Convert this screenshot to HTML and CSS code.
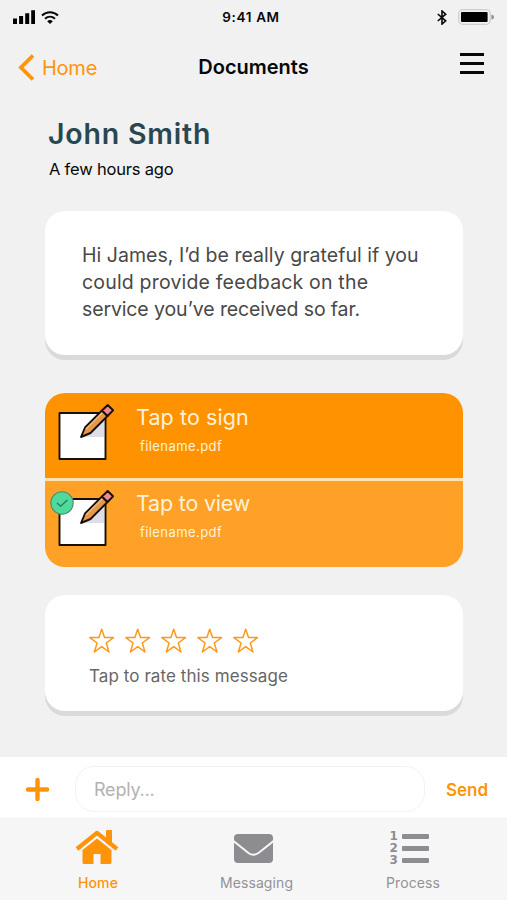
FILE: index.html
```html
<!DOCTYPE html>
<html lang="en">
<head>
<meta charset="utf-8">
<title>Documents</title>
<link rel="stylesheet" href="styles.css">
</head>
<body>
<svg class="defs" width="0" height="0" aria-hidden="true">
  <symbol id="note" viewBox="0 0 60 60">
    <path d="M4 10.5H50V57H4Z" fill="#fff"/>
    <path d="M49 15V35H29Z" fill="#dedee9"/>
    <path d="M4.5 11H50.500V57H4.5Z" fill="none" stroke="#170f08" stroke-width="1.9" stroke-linejoin="round"/>
    <path d="M26 35L30 25.500L47 8.500L52.500 14L35.500 31Z" fill="#e5984a" stroke="#170f08" stroke-width="1.9" stroke-linejoin="round"/>
    <path d="M31 27L47.300 10.700" stroke="#f4b873" stroke-width="1.5"/>
    <path d="M47 8.500L52.700 3L58.100 8.300L52.500 14Z" fill="#f08795" stroke="#170f08" stroke-width="1.9" stroke-linejoin="round"/>
  </symbol>
  <symbol id="star" viewBox="0 0 26 26">
    <path d="M12.700 1.300L15.500 9.600H24.500L17.300 15L20 24L12.700 18.700L5.400 24L8.100 15L.9 9.600H9.900Z" fill="none" stroke="#ff981c" stroke-width="1.500" stroke-linejoin="round"/>
  </symbol>
</svg>
<div class="screen">
  <div class="status">
    <div class="signal">
      <svg width="22" height="14" viewBox="0 0 22 14"><path d="M0 8.500H4V14H0ZM6.100 6H10.100V14H6.100ZM12.200 3.200H16.200V14H12.200ZM18.200 .2H22V14H18.200Z"/></svg>
      <svg width="18" height="13" viewBox="0 0 18 13"><path d="M1 4.500C5.500 .1 12.500 .1 17 4.500M4 7.800C7 5.100 11 5.100 14 7.800" fill="none" stroke="#080808" stroke-width="2"/><path d="M6.200 10.200Q9 8 11.800 10.200L9 13Z"/></svg>
    </div>
    <span class="clock">9:41 AM</span>
    <div class="power">
      <svg width="10" height="15" viewBox="0 0 10 15"><path d="M.8 4L8.700 10.800L5 14V1L8.700 4.200L.8 11" fill="none" stroke="#080808" stroke-width="1.600"/></svg>
      <svg width="37" height="16" viewBox="0 0 37 16"><rect x=".7" y=".7" width="31.600" height="14.600" rx="4" fill="none" stroke="#cfcfcf" stroke-width="1.300"/><rect x="3" y="3" width="26.600" height="10" rx="1"/><path d="M33.500 5.500Q36 6 36 8Q36 10 33.500 10.500Z" fill="#888"/></svg>
    </div>
  </div>
  <header class="nav">
    <div class="back"><svg width="17" height="27" viewBox="0 0 17 27"><path d="M15 1.500L3 13.500L15 25.500" fill="none" stroke="#ff9409" stroke-width="3.800"/></svg><span>Home</span></div>
    <h1>Documents</h1>
    <div class="menu"><i></i><i></i><i></i></div>
  </header>
  <main>
    <div class="sender"><h2>John Smith</h2><p>A few hours ago</p></div>
    <section class="card message">
      <p class="line1">Hi James, I’d be really grateful if you</p>
      <p class="line2">could provide feedback on the</p>
      <p class="line3">service you’ve received so far.</p>
    </section>
    <section class="docs">
      <div class="doc sign">
        <svg class="note" width="60" height="60"><use href="#note"/></svg>
        <div><h3>Tap to sign</h3><p>filename.pdf</p></div>
      </div>
      <div class="doc view">
        <div class="thumb">
          <svg class="note" width="60" height="60"><use href="#note"/></svg>
          <svg class="check" width="24" height="24" viewBox="0 0 24 24"><circle cx="12" cy="12" r="11.200" fill="#4fd99a" stroke="#4c8c67" stroke-width="1.100"/><path d="M7 12L10.700 15.300L17.300 9" fill="none" stroke="#267858" stroke-width="1.200"/></svg>
        </div>
        <div><h3 class="view-title">Tap to view</h3><p>filename.pdf</p></div>
      </div>
    </section>
    <section class="card rating">
      <div class="stars">
        <svg width="26" height="26"><use href="#star"/></svg><svg width="26" height="26"><use href="#star"/></svg><svg width="26" height="26"><use href="#star"/></svg><svg width="26" height="26"><use href="#star"/></svg><svg width="26" height="26"><use href="#star"/></svg>
      </div>
      <p>Tap to rate this message</p>
    </section>
  </main>
  <div class="composer">
    <svg width="23" height="23" viewBox="0 0 23 23"><path d="M11.500 2V21M2 11.500H21" stroke="#ff9409" stroke-width="4.400" stroke-linecap="round"/></svg>
    <div class="field">Reply...</div>
    <span class="send">Send</span>
  </div>
  <nav class="tabs">
    <div class="tab home">
      <svg width="44" height="36" viewBox="0 0 44 36"><path d="M2 20L22 3.800L42 20" fill="none" stroke="#ff9409" stroke-width="4.200" stroke-linejoin="round"/><path d="M31 2Q31 1 32 1H36Q37 1 37 2V15L31 10ZM22 9.500L36.500 21V33.500Q36.500 35 35 35H25.500V25H18.500V35H9Q7.500 35 7.500 33.500V21Z" fill="#ff9409"/></svg>
      <span>Home</span>
    </div>
    <div class="tab messaging">
      <svg width="39" height="29" viewBox="0 0 39 29"><rect width="39" height="29" rx="4" fill="#8d8d91"/><path d="M-.5 7L14.500 19Q19.500 22.500 24.500 19L39.500 7" fill="none" stroke="#f6f6f7" stroke-width="2"/></svg>
      <span>Messaging</span>
    </div>
    <div class="tab process">
      <div class="list">
        <div class="nums"><b>1</b><b>2</b><b>3</b></div>
        <div class="bars"><i></i><i></i><i></i></div>
      </div>
      <span>Process</span>
    </div>
  </nav>
</div>
</body>
</html>
```
FILE: styles.css
```css
* { box-sizing: border-box; margin: 0; padding: 0; }
body { background: #f1f1f1; font-family: Inter, "Liberation Sans", sans-serif; color: #080808; }
.defs { position: absolute; }
svg { display: block; flex: none; }
.screen { width: 507px; height: 900px; display: flex; flex-direction: column; overflow: hidden; white-space: nowrap; }

.status { height: 34px; display: grid; grid-template-columns: 1fr auto 1fr; align-items: center; padding: 0 13px 0 8px; }
.signal { display: flex; align-items: center; gap: 6px; padding-left: 5px; }
.clock { font-size: 13.5px; font-weight: 600; letter-spacing: .65px; }
.power { display: flex; align-items: center; justify-content: flex-end; gap: 11px; margin-right: -1px; }

.nav { height: 67px; display: grid; grid-template-columns: 1fr auto 1fr; align-items: center; padding: 0 22px 0 18px; }
.back { display: flex; align-items: center; gap: 7px; color: #ff9409; font-size: 20px; letter-spacing: -.25px; }
.nav h1 { font-size: 20px; font-weight: 600; line-height: 26px; margin: 0 0 2px 4px; }
.menu { justify-self: end; width: 24px; display: flex; flex-direction: column; gap: 6px; margin: 0 1px 8px 0; }
.menu i { height: 3px; background: #080808; }

main { height: 656px; padding: 17px 44px 0 45px; }
.sender { padding-left: 4px; height: 93px; }
.sender h2 { font-size: 28.5px; line-height: 31px; font-weight: 600; letter-spacing: .8px; color: #2a4750; margin-left: -1px; }
.sender p { font-size: 16.5px; line-height: 20px; letter-spacing: -.2px; margin-top: 10px; }
.card { background: #fff; border-radius: 20px; box-shadow: 0 5px 0 #dadada; }
.message { height: 144px; padding: 31px 37px; font-size: 19.5px; line-height: 27px; color: #484848; }
.line1 { letter-spacing: .03px; }
.line2 { letter-spacing: .18px; }
.line3 { letter-spacing: -.13px; }
.docs { height: 174px; margin-top: 38px; border-radius: 20px; overflow: hidden; color: #fff2d9; }
.doc { display: flex; gap: 21px; padding-left: 10px; }
.sign { height: 88px; background: #ff9200; border-bottom: 3px solid #ffe2b3; padding-top: 9px; }
.view { height: 86px; background: #ffa126; padding-top: 7px; }
.doc h3 { font-size: 21.5px; line-height: 30px; font-weight: 400; letter-spacing: .1px; }
.doc .view-title { letter-spacing: -.2px; }
.doc p { font-size: 13px; line-height: 20px; letter-spacing: .42px; margin: 4px 0 0 4px; }
.thumb { position: relative; }
.check { position: absolute; left: -5px; top: 3px; }
.rating { height: 116px; margin-top: 28px; padding: 33px 44px; color: #666; font-size: 17px; }
.stars { display: flex; gap: 10px; }
.rating p { line-height: 22px; letter-spacing: .08px; margin-top: 11px; }

.composer { height: 62px; flex: none; background: #fff; display: flex; align-items: center; padding: 3px 19px 0 26px; border-bottom: 1px solid #f0f0f0; }
.field { width: 350px; height: 46px; border: 1px solid #f3f3f3; border-radius: 19px; margin-left: 26px; padding: 1px 0 0 18px; line-height: 44px; font-size: 18px; letter-spacing: -.2px; color: #b2b2b2; }
.send { margin-left: auto; padding-top: 1px; font-size: 17px; font-weight: 600; color: #ff9409; }
.tabs { height: 81px; flex: none; background: #f6f6f7; display: flex; padding-left: 20px; }
.tab { display: flex; flex-direction: column; align-items: center; color: #929296; font-size: 14px; letter-spacing: .1px; padding-top: 10px; }
.tab span { line-height: 18px; margin-top: auto; margin-bottom: 8px; }
.home { width: 156px; color: #ff9409; }
.home svg { margin-right: 3px; }
.home span { font-weight: 500; }
.messaging { width: 161px; padding-top: 15px; }
.messaging svg { margin-right: 6px; }
.process { width: 152px; padding-top: 11px; }
.list { display: flex; gap: 5px; margin-right: 8px; }
.nums { width: 7px; display: flex; flex-direction: column; font: 700 12px/12px "DejaVu Sans", sans-serif; letter-spacing: 0; color: #8d8d91; }
.bars { display: flex; flex-direction: column; gap: 7px; padding-top: 4px; }
.bars i { width: 27px; height: 5px; border-radius: 1px; background: #8d8d91; }
```
